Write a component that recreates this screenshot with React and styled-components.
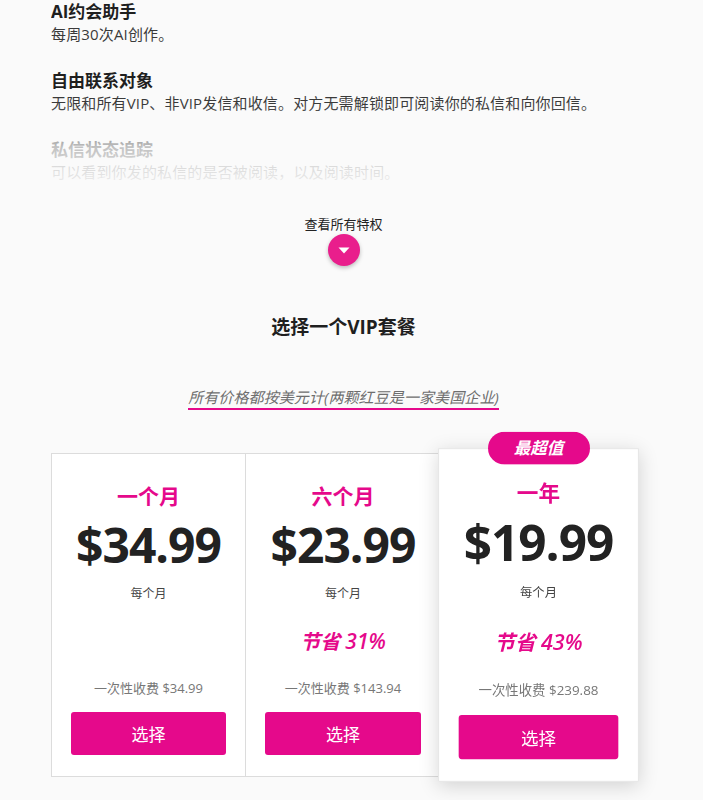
import React from 'react'
import styled, { createGlobalStyle } from 'styled-components'

const PINK = '#e5098b'

const features = [
  { title: 'AI约会助手', desc: '每周30次AI创作。' },
  { title: '自由联系对象', desc: '无限和所有VIP、非VIP发信和收信。对方无需解锁即可阅读你的私信和向你回信。' },
  { title: '私信状态追踪', desc: '可以看到你发的私信的是否被阅读，以及阅读时间。' }
]

const plans = [
  { name: '一个月', price: '$34.99', save: null, total: '$34.99' },
  { name: '六个月', price: '$23.99', save: '31%', total: '$143.94' },
  { name: '一年', price: '$19.99', save: '43%', total: '$239.88', best: true }
]

export default function App() {
  return (
    <>
      <GlobalStyle />
      <Page>
        <Container>
          <Features>
            {features.map(f => (
              <Feature key={f.title}>
                <FeatureTitle>{f.title}</FeatureTitle>
                <FeatureDesc>{f.desc}</FeatureDesc>
              </Feature>
            ))}
            <Fade />
          </Features>

          <Toggle>
            <ToggleLabel>查看所有特权</ToggleLabel>
            <RoundButton aria-label="查看所有特权">
              <svg width="12" height="7" viewBox="0 0 12 7">
                <path d="M0.5 0.5 L11.5 0.5 L6 6.5 Z" fill="#fff" />
              </svg>
            </RoundButton>
          </Toggle>

          <Heading>选择一个VIP套餐</Heading>
          <NoteRow>
            <Note>所有价格都按美元计(两颗红豆是一家美国企业)</Note>
          </NoteRow>

          <Plans>
            {plans.map((p, i) => (
              <Card key={p.name} $best={p.best} $first={i === 0}>
                {p.best && <Badge>最超值</Badge>}
                <PlanName>{p.name}</PlanName>
                <Price>{p.price}</Price>
                <PerMonth>每个月</PerMonth>
                <Save $hidden={!p.save}>节省 <Pct>{p.save || '0%'}</Pct></Save>
                <Total>一次性收费 {p.total}</Total>
                <SelectButton>选择</SelectButton>
              </Card>
            ))}
          </Plans>
        </Container>
      </Page>
    </>
  )
}

const GlobalStyle = createGlobalStyle`
  html, body {
    margin: 0;
    padding: 0;
    background: #fafafa;
  }
  body {
    font-family: "Open Sans", "Noto Sans CJK SC", sans-serif;
    color: #222;
  }
  * { box-sizing: border-box; }
`

const Page = styled.div`
  padding: 0 0 40px 51px;
  overflow: hidden;
`

const Container = styled.div`
  width: 585px;
`

const Features = styled.div`
  position: relative;
  height: 200px;
  overflow: hidden;
`

const Feature = styled.div`
  margin-bottom: 25px;
`

const FeatureTitle = styled.div`
  font-size: 17px;
  line-height: 24px;
  font-weight: 700;
  color: #1f1f1f;
`

const FeatureDesc = styled.div`
  font-size: 15px;
  line-height: 20px;
  color: #3a3a3a;
  letter-spacing: 0.15px;
  white-space: nowrap;
`

const Fade = styled.div`
  position: absolute;
  left: -40px;
  right: -60px;
  bottom: 0;
  height: 95px;
  background: linear-gradient(to bottom, rgba(250, 250, 250, 0) 0%, rgba(250, 250, 250, 0.75) 45%, #fafafa 100%);
`

const Toggle = styled.div`
  display: flex;
  flex-direction: column;
  align-items: center;
  margin-top: 15px;
`

const ToggleLabel = styled.div`
  font-size: 13px;
  line-height: 18px;
  color: #222;
`

const RoundButton = styled.button`
  margin-top: 1px;
  width: 32px;
  height: 32px;
  border: none;
  border-radius: 50%;
  background: #e91e8c;
  box-shadow: 0 2px 4px rgba(0, 0, 0, 0.25);
  display: flex;
  align-items: center;
  justify-content: center;
  padding: 0;
  cursor: pointer;
`

const Heading = styled.h2`
  margin: 48px 0 0;
  text-align: center;
  font-size: 19px;
  line-height: 26px;
  font-weight: 700;
  color: #1f1f1f;
`

const NoteRow = styled.div`
  display: flex;
  justify-content: center;
  margin-top: 47px;
`

const Note = styled.span`
  font-size: 15px;
  line-height: 20px;
  font-style: italic;
  letter-spacing: 0.1px;
  color: #6e6e6e;
  padding-bottom: 1px;
  border-bottom: 2px solid ${PINK};
`

const Plans = styled.div`
  display: flex;
  margin-top: 43px;
`

const Card = styled.div`
  position: relative;
  width: 195px;
  flex: 0 0 195px;
  background: #fff;
  border: 1px solid ${p => (p.$best ? '#e6e6e6' : '#dcdcdc')};
  border-left-width: ${p => (p.$first || p.$best ? '1px' : '0')};
  padding: 27px 19px 21px;
  display: flex;
  flex-direction: column;
  align-items: center;
  ${p => p.$best && `
    transform: scale(1.03);
    box-shadow: 0 4px 18px rgba(0, 0, 0, 0.16);
    z-index: 1;
  `}
`

const Badge = styled.div`
  position: absolute;
  top: -17px;
  left: 50%;
  transform: translateX(-50%);
  width: 99px;
  height: 32px;
  border-radius: 16px;
  background: ${PINK};
  color: #fff;
  font-size: 16px;
  font-weight: 700;
  font-style: italic;
  line-height: 32px;
  text-align: center;
`

const PlanName = styled.div`
  font-size: 21px;
  line-height: 30px;
  font-weight: 700;
  color: ${PINK};
`

const Price = styled.div`
  font-size: 48px;
  line-height: 56px;
  font-weight: 700;
  letter-spacing: -1px;
  color: #222;
  margin-top: 6px;
`

const PerMonth = styled.div`
  font-size: 12px;
  line-height: 18px;
  color: #444;
  margin-top: 12px;
`

const Save = styled.div`
  font-size: 20px;
  line-height: 28px;
  font-weight: 700;
  font-style: italic;
  color: ${PINK};
  margin-top: 24px;
  visibility: ${p => (p.$hidden ? 'hidden' : 'visible')};
`

const Pct = styled.span`
  font-weight: 600;
  font-size: 21px;
`

const Total = styled.div`
  font-size: 13px;
  line-height: 18px;
  color: #777;
  margin-top: 23px;
`

const SelectButton = styled.button`
  margin-top: 15px;
  width: 100%;
  height: 43px;
  border: none;
  border-radius: 3px;
  background: ${PINK};
  color: #fff;
  font-family: "Open Sans", "Noto Sans CJK SC", sans-serif;
  font-size: 17px;
  cursor: pointer;
`
